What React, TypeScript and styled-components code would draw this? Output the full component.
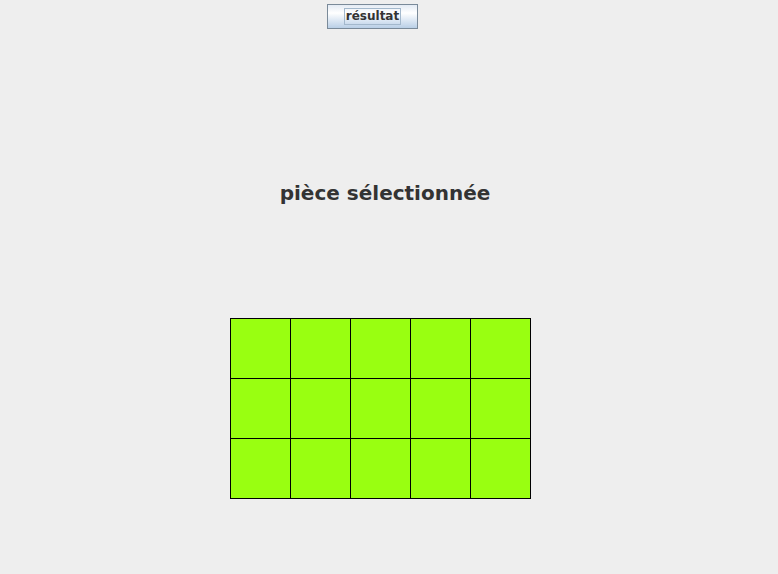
import React from "react";
import styled, { createGlobalStyle } from "styled-components";

const Global = createGlobalStyle`
  html, body { margin: 0; padding: 0; background: #eeeeee; }
  body { width: 778px; height: 574px; overflow: hidden; font-family: "DejaVu Sans", sans-serif; }
`;

const Page = styled.div`
  display: flex;
  flex-direction: column;
  width: 778px;
  height: 574px;
`;

const Row = styled.div<{ $left: number; $top: number }>`
  display: flex;
  padding-left: ${(p) => p.$left}px;
  margin-top: ${(p) => p.$top}px;
`;

const Button = styled.button`
  box-sizing: border-box;
  width: 91px;
  height: 25px;
  border: 1px solid #7a8a99;
  background: linear-gradient(to bottom, #e3ebf4 0%, #ffffff 35%, #e9f0f8 55%, #b9cfe6 100%);
  padding: 0;
  display: flex;
  align-items: center;
  justify-content: center;
  font-family: "DejaVu Sans", sans-serif;
  font-weight: bold;
  font-size: 12px;
  color: #333333;
`;

const Focus = styled.span`
  border: 1px solid #a3b8cc;
  padding: 0 1px;
  line-height: 15px;
`;

const Title = styled.div`
  width: 770px;
  text-align: center;
  font-family: "DejaVu Sans", sans-serif;
  font-weight: bold;
  font-size: 20px;
  line-height: 22px;
  color: #333333;
`;

const Grid = styled.div`
  display: grid;
  grid-template-columns: repeat(5, 60px);
  grid-template-rows: repeat(3, 60px);
  border-left: 1px solid #000;
  border-top: 1px solid #000;
`;

const Cell = styled.div`
  box-sizing: border-box;
  background: #99ff11;
  border-right: 1px solid #000;
  border-bottom: 1px solid #000;
`;

export default function App() {
  return (
    <>
      <Global />
      <Page>
        <Row $left={327} $top={4}>
          <Button>
            <Focus>résultat</Focus>
          </Button>
        </Row>
        <Row $left={0} $top={153}>
          <Title>pièce sélectionnée</Title>
        </Row>
        <Row $left={230} $top={114}>
          <Grid>
            {Array.from({ length: 15 }).map((_, i) => (
              <Cell key={i} />
            ))}
          </Grid>
        </Row>
      </Page>
    </>
  );
}
